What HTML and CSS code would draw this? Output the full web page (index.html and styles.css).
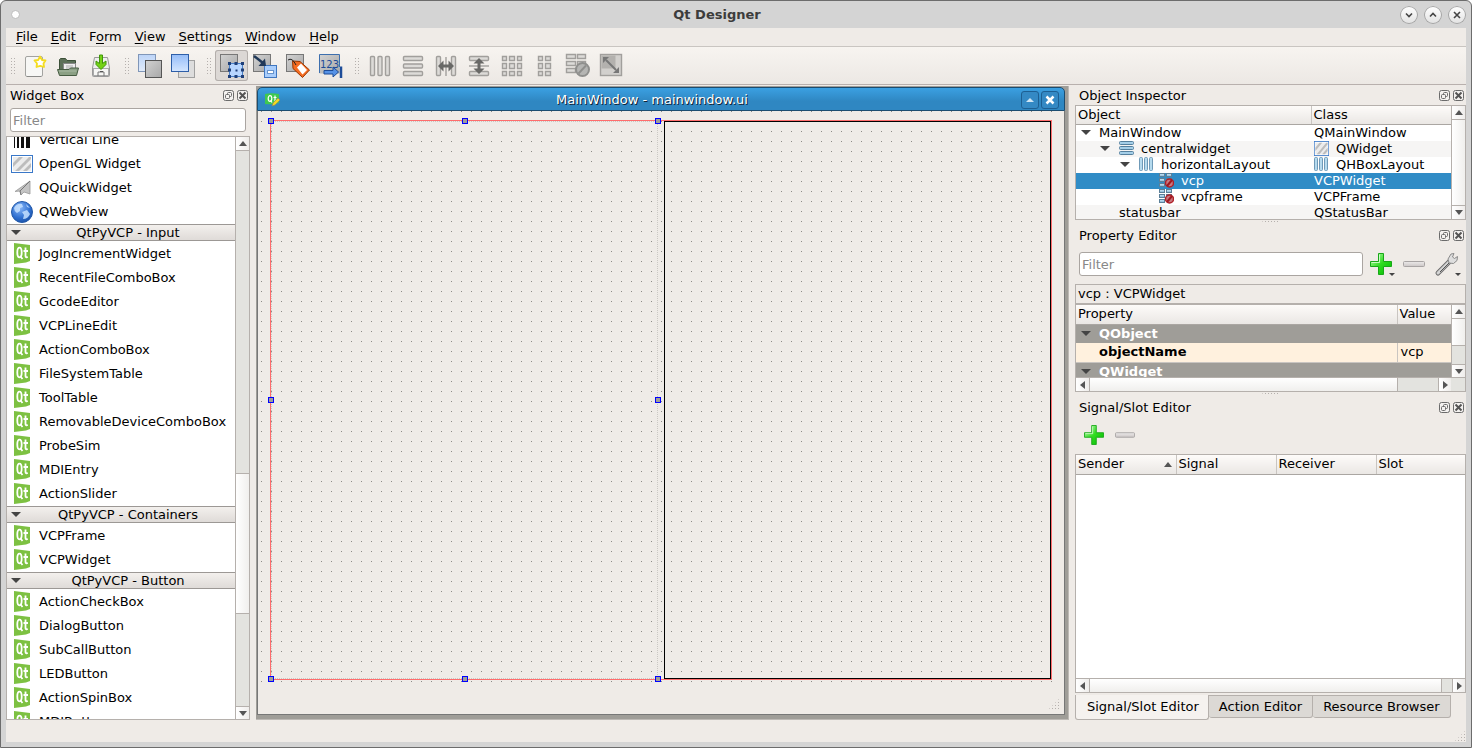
FILE: index.html
```html
<!DOCTYPE html>
<html lang="en">
<head>
<meta charset="utf-8">
<title>Qt Designer</title>
<link rel="stylesheet" href="styles.css">
</head>
<body>
<svg class="defs" aria-hidden="true">
  <defs>
    <linearGradient id="gGray" x1="0" y1="0" x2="1" y2="1"><stop offset="0" stop-color="#d2d2d2"/><stop offset="1" stop-color="#a8a8a8"/></linearGradient>
    <linearGradient id="gBlue" x1="0" y1="0" x2="0" y2="1"><stop offset="0" stop-color="#94bcf8"/><stop offset="1" stop-color="#d4e6ff"/></linearGradient>
    <linearGradient id="gPale" x1="0" y1="0" x2="0" y2="1"><stop offset="0" stop-color="#bcd4f8"/><stop offset="1" stop-color="#e2ecfa"/></linearGradient>
    <linearGradient id="gBar" x1="0" y1="0" x2="0" y2="1"><stop offset="0" stop-color="#d4ecf8"/><stop offset="1" stop-color="#7fb2d6"/></linearGradient>
    <linearGradient id="gGreen" x1="0" y1="0" x2="1" y2="1"><stop offset="0" stop-color="#c8ffc0"/><stop offset=".5" stop-color="#30dc20"/><stop offset="1" stop-color="#00b400"/></linearGradient>
    <linearGradient id="gMinus" x1="0" y1="0" x2="0" y2="1"><stop offset="0" stop-color="#eceaea"/><stop offset="1" stop-color="#cbc6c6"/></linearGradient>
    <radialGradient id="gGlobe" cx=".4" cy=".3" r=".8"><stop offset="0" stop-color="#8ab8f8"/><stop offset=".6" stop-color="#2f6fd0"/><stop offset="1" stop-color="#164a9c"/></radialGradient>
  </defs>
  <symbol id="qt" viewBox="0 0 22 22">
    <path d="M3 0 19 2V18L15 19.500 3 21Z" fill="#7dc142"/>
    <ellipse cx="8.500" cy="9.500" rx="2.200" ry="4.800" fill="none" stroke="#fff" stroke-width="1.800"/>
    <path d="M9.200 13 11.500 16M14.500 4.500V13Q14.500 14.800 16.800 14M12.500 8H17" fill="none" stroke="#fff" stroke-width="1.800"/>
  </symbol>
  <symbol id="float" viewBox="0 0 11 11">
    <rect x=".5" y=".5" width="10" height="10" rx="2" fill="#f4f2f0" stroke="#6b6b6b"/>
    <rect x="4.500" y="2.500" width="4" height="4" rx="1" fill="none" stroke="#6b6b6b"/>
    <rect x="2.500" y="4.500" width="4" height="4" rx="1" fill="#f4f2f0" stroke="#6b6b6b"/>
  </symbol>
  <symbol id="close" viewBox="0 0 11 11">
    <rect x=".5" y=".5" width="10" height="10" rx="2" fill="#f4f2f0" stroke="#6b6b6b"/>
    <path d="M2.500 2.500 8.500 8.500M8.500 2.500 2.500 8.500" stroke="#555" stroke-width="2"/>
  </symbol>
  <symbol id="plus" viewBox="0 0 22 22">
    <path d="M8.500 .5H13.500V8.500H21.500V13.500H13.500V21.500H8.500V13.500H.5V8.500H8.500Z" fill="url(#gGreen)" stroke="#18a818"/>
    <path d="M9.500 1.500V9.500H1.500" fill="none" stroke="#e4ffe0" opacity=".8"/>
  </symbol>
  <symbol id="minus" viewBox="0 0 22 22">
    <rect x=".5" y="8.500" width="21" height="5" rx="1" fill="url(#gMinus)" stroke="#a8a4a4"/>
  </symbol>
  <symbol id="hbars" viewBox="0 0 15 15">
    <g fill="#a5cfe8" stroke="#55809e"><rect x=".5" y=".5" width="14" height="3" rx="1"/><rect x=".5" y="5.500" width="14" height="3" rx="1"/><rect x=".5" y="10.500" width="14" height="3" rx="1"/></g>
  </symbol>
  <symbol id="vbars" viewBox="0 0 15 15">
    <g fill="#b5daee" stroke="#6f9ab8"><rect x=".5" y=".5" width="3" height="13" rx="1"/><rect x="5.500" y=".5" width="3" height="13" rx="1"/><rect x="10.500" y=".5" width="3" height="13" rx="1"/></g>
  </symbol>
  <symbol id="nolayout" viewBox="0 0 15 15">
    <g fill="url(#gBar)" stroke="#5c8099"><rect x=".5" y=".5" width="5" height="3"/><rect x="7.500" y=".5" width="5" height="3"/><rect x=".5" y="5.500" width="5" height="3"/><rect x="7.500" y="5.500" width="5" height="3"/><rect x=".5" y="10.500" width="5" height="3"/></g>
    <circle cx="10.500" cy="10" r="4" fill="#c87880" stroke="#b02028" stroke-width="1.500"/><path d="M13 7 8 13" stroke="#a01820" stroke-width="2"/>
  </symbol>
  <symbol id="stripes" viewBox="0 0 22 18" preserveAspectRatio="none">
    <rect x=".5" y=".5" width="21" height="17" fill="#fff" stroke="#3a78c8"/>
    <rect x="2" y="2" width="18" height="14" fill="#ececec"/>
    <path d="M2 12V8L8 2H12ZM4 16 18 2H20V4L8 16ZM12 16 20 8V12L16 16Z" fill="#bdbdbd"/>
  </symbol>
</svg>

<div class="app">
  <header class="titlebar">
    <span class="pin"></span>
    <h1>Qt Designer</h1>
    <div class="winbuttons">
      <button aria-label="Minimize"><svg viewBox="0 0 18 18"><path d="M6 7.500 9 10.500 12 7.500"/></svg></button>
      <button aria-label="Maximize"><svg viewBox="0 0 18 18"><path d="M6 10.500 9 7.500 12 10.500"/></svg></button>
      <button aria-label="Close"><svg viewBox="0 0 18 18"><path d="M6 6 12 12M12 6 6 12"/></svg></button>
    </div>
  </header>

  <div class="client">
    <nav class="menu">
      <button><u>F</u>ile</button><button><u>E</u>dit</button><button>F<u>o</u>rm</button><button><u>V</u>iew</button><button><u>S</u>ettings</button><button><u>W</u>indow</button><button><u>H</u>elp</button>
    </nav>

    <div class="toolbar">
      <span class="grip"></span>
      <button aria-label="New"><svg viewBox="0 0 24 24"><rect x="2.500" y="2.500" width="17" height="20" rx="1.500" fill="#f7f7f5" stroke="#a3a3a0"/><path d="M4 22.500H18" stroke="#8a8a88"/><path d="M17 2.500 19 6 22.500 6.500 20.500 9.500 21 13 17.200 11.800 13.500 13 14 9.500 11.500 6.500 15.200 6Z" fill="#fff" stroke="#f4dc20" stroke-width="1.800" stroke-linejoin="round"/></svg></button>
      <button aria-label="Open"><svg viewBox="0 0 24 24"><path d="M3.500 20V5.500L4.500 4.500H9.500L11 6.500H19.500V14" fill="#5c7058" stroke="#3c5038"/><rect x="7.500" y="9.500" width="12" height="9" fill="#eee" stroke="#888"/><path d="M10 12H17M10 14H17" stroke="#aaa"/><path d="M1.500 15.500H13L14.500 14H22.500L20.500 21.500H3.500Z" fill="#8ba084" stroke="#465c42"/><path d="M3 17H20.500" stroke="#a9baa4"/></svg></button>
      <button aria-label="Save"><svg viewBox="0 0 24 24"><path d="M5.500 3.500H18.500L20.500 14V21.500Q20.500 22.500 19.500 22.500H4.500Q3.500 22.500 3.500 21.500V14Z" fill="#eee" stroke="#999"/><rect x="4.500" y="14.500" width="15" height="7" fill="#f6f6f4" stroke="#aaa"/><path d="M9 22V18H15V22" fill="none" stroke="#777"/><path d="M11 17.500H14" stroke="#555"/><path d="M10.500 1H13.500V9.500L17 7V10.500L12 15.500 7 10.500V7L10.500 9.500Z" fill="#74d216" stroke="#3f9608"/></svg></button>
      <span class="grip"></span>
      <button aria-label="Send to back"><svg viewBox="0 0 24 24"><rect x=".5" y=".5" width="17" height="17" fill="url(#gPale)" stroke="#8096b8"/><rect x="7.500" y="6.500" width="16" height="17" fill="url(#gGray)" stroke="#555"/></svg></button>
      <button aria-label="Bring to front"><svg viewBox="0 0 24 24"><rect x="7.500" y="6.500" width="16" height="17" fill="#ddd" stroke="#a0a0a0"/><rect x=".5" y=".5" width="17" height="17" fill="url(#gBlue)" stroke="#2d5ea8"/></svg></button>
      <span class="grip"></span>
      <button class="active" aria-label="Edit widgets"><svg viewBox="0 0 24 24"><rect x=".5" y=".5" width="17" height="17" fill="url(#gGray)" stroke="#777"/><rect x="9.500" y="9.500" width="13" height="13" fill="#b8d6ff" stroke="#4a80c8"/><path d="M8 8h3v3H8ZM14.500 8h3v3h-3ZM21 8h3v3h-3ZM8 14.500h3v3H8ZM21 14.500h3v3h-3ZM8 21h3v3H8ZM14.500 21h3v3h-3ZM21 21h3v3h-3ZM15.500 15.500h2v2h-2Z" fill="#1f3f78"/></svg></button>
      <button aria-label="Edit signals and slots"><svg viewBox="0 0 24 24"><rect x=".5" y=".5" width="17" height="17" fill="url(#gGray)" stroke="#777"/><rect x="11.500" y="11.500" width="12" height="12" fill="#a9cdfb" stroke="#3f76c0"/><rect x="14.500" y="16.500" width="6" height="3" fill="#fff" stroke="#6794cd"/><path d="M1 2 10 9" stroke="#203858" stroke-width="2.500"/><path d="M13 12H5.500L12 4.500Z" fill="#203858"/></svg></button>
      <button aria-label="Edit buddies"><svg viewBox="0 0 24 24"><rect x=".5" y=".5" width="17" height="17" fill="url(#gGray)" stroke="#777"/><path d="M6.500 7 14 7.500 23.500 16 16.500 23.500 7 14.500Z" fill="#f46b20" stroke="#983500"/><path d="M11 13.500 15 9.500 21 16 16.500 20.500Z" fill="#fff"/><path d="M2 6Q6 3 10 11" fill="none" stroke="#222"/></svg></button>
      <button aria-label="Edit tab order"><svg viewBox="0 0 24 24"><path d="M.5.5H20.500V19.500H.5Z" fill="url(#gGray)" stroke="none"/><path d="M.5 19V.5H20.500V13" fill="none" stroke="#3d6fae"/><text class="order" x="1" y="14">123</text><path d="M5 16.500H14V13L19.500 18 14 23V20H5Z" fill="#5692e6" stroke="#1d4c98"/><path d="M22 12.500V24" stroke="#1d4c98" stroke-width="2.500"/></svg></button>
      <span class="grip"></span>
      <button class="off" aria-label="Lay out horizontally"><svg viewBox="0 0 24 24"><rect x="2.500" y="2.500" width="4" height="19" rx="1"/><rect x="10" y="2.500" width="4" height="19" rx="1"/><rect x="17.500" y="2.500" width="4" height="19" rx="1"/></svg></button>
      <button class="off" aria-label="Lay out vertically"><svg viewBox="0 0 24 24"><rect x="2.500" y="2.500" width="19" height="4" rx="1"/><rect x="2.500" y="10" width="19" height="4" rx="1"/><rect x="2.500" y="17.500" width="19" height="4" rx="1"/></svg></button>
      <button class="off" aria-label="Horizontal splitter"><svg viewBox="0 0 24 24"><rect x="2.500" y="2.500" width="4" height="19" rx="1"/><rect x="17.500" y="2.500" width="4" height="19" rx="1"/><path d="M12 3V22"/><path class="ink" d="M4 12 9.500 6.500V10.500H14.500V6.500L20 12 14.500 17.500V13.500H9.500V17.500Z"/></svg></button>
      <button class="off" aria-label="Vertical splitter"><svg viewBox="0 0 24 24"><rect x="2.500" y="2.500" width="19" height="4" rx="1"/><rect x="2.500" y="17.500" width="19" height="4" rx="1"/><path d="M2 12H22"/><path class="ink" d="M12 4 17.500 9.500H13.500V14.500H17.500L12 20 6.500 14.500H10.500V9.500H6.500Z"/></svg></button>
      <button class="off" aria-label="Grid layout"><svg viewBox="0 0 24 24"><path d="M2.500 2.500h4v4h-4ZM9.500 2.500h5v4h-5ZM17.500 2.500h4v4h-4ZM2.500 9.500h4v5h-4ZM9.500 9.500h5v5h-5ZM17.500 9.500h4v5h-4ZM2.500 17.500h4v4h-4ZM9.500 17.500h5v4h-5ZM17.500 17.500h4v4h-4Z"/></svg></button>
      <button class="off" aria-label="Form layout"><svg viewBox="0 0 24 24"><path d="M5.500 2.500h4v4h-4ZM12.500 2.500h5v4h-5ZM5.500 9.500h4v5h-4ZM12.500 9.500h5v5h-5ZM5.500 17.500h4v4h-4ZM12.500 17.500h5v4h-5Z"/></svg></button>
      <button class="off" aria-label="Break layout"><svg viewBox="0 0 24 24"><path d="M.5.5h9v4h-9ZM11.500.5h8v4h-8ZM.5 7.500h9v4h-9ZM11.500 7.500h8v4h-8ZM.5 14.500h9v4h-9Z"/><circle cx="16.500" cy="15.500" r="6.500" fill="#b5b5b3" stroke="#8f8f8d" stroke-width="2"/><path d="M20 11.500 12.500 19.500" stroke="#8f8f8d" stroke-width="2"/></svg></button>
      <button class="off" aria-label="Adjust size"><svg viewBox="0 0 24 24"><rect x="1.500" y=".5" width="21" height="21" fill="#d2d0cd"/><rect x="2.500" y="1.500" width="14" height="13" fill="#b3b1ae" stroke="none"/><path d="M7 6 17 16" stroke="#777" stroke-width="2"/><path class="ink2" d="M4 3H10L4 9ZM20 19H14L20 13Z"/></svg></button>
    </div>

    <main class="work">
      <section class="dock left">
        <div class="dock-title"><h2>Widget Box</h2><button aria-label="Float"><svg><use href="#float"/></svg></button><button aria-label="Close"><svg><use href="#close"/></svg></button></div>
        <div class="wb-filter"><input type="text" placeholder="Filter" aria-label="Filter widgets"></div>
        <div class="frame widgetbox">
          <div class="viewport">
            <ul class="first">
              <li><svg viewBox="0 0 22 22"><path d="M3 2h1V19H3ZM6 2h2V19H6ZM10 2h3V19H10ZM15 2h4V19H15Z" fill="#111"/></svg>Vertical Line</li>
              <li><svg viewBox="0 0 22 22"><use href="#stripes" width="22" height="18" y="2"/></svg>OpenGL Widget</li>
              <li><svg viewBox="0 0 22 22"><path d="M4 14.500 19 4V17L13 15 10 18 9 14Z" fill="#c4c4c4" stroke="#999" stroke-width=".8"/><path d="M19 4 9 14 10 18" fill="none" stroke="#777"/></svg>QQuickWidget</li>
              <li><svg viewBox="0 0 22 22"><circle cx="11" cy="11" r="10.500" fill="url(#gGlobe)" stroke="#2258a8"/><path d="M3 7Q6 2 11 3L12 6 9 7 9 10 6 12Q3 10 3 7ZM11 11 16 9 19 13Q17 18 12 18L13 14ZM15 3 19 7 16 6Z" fill="#c6e0ff" opacity=".85"/></svg>QWebView</li>
            </ul>
            <button class="cat"><i class="down"></i><span>QtPyVCP - Input</span></button>
            <ul>
              <li><svg><use href="#qt"/></svg>JogIncrementWidget</li>
              <li><svg><use href="#qt"/></svg>RecentFileComboBox</li>
              <li><svg><use href="#qt"/></svg>GcodeEditor</li>
              <li><svg><use href="#qt"/></svg>VCPLineEdit</li>
              <li><svg><use href="#qt"/></svg>ActionComboBox</li>
              <li><svg><use href="#qt"/></svg>FileSystemTable</li>
              <li><svg><use href="#qt"/></svg>ToolTable</li>
              <li><svg><use href="#qt"/></svg>RemovableDeviceComboBox</li>
              <li><svg><use href="#qt"/></svg>ProbeSim</li>
              <li><svg><use href="#qt"/></svg>MDIEntry</li>
              <li><svg><use href="#qt"/></svg>ActionSlider</li>
            </ul>
            <button class="cat"><i class="down"></i><span>QtPyVCP - Containers</span></button>
            <ul>
              <li><svg><use href="#qt"/></svg>VCPFrame</li>
              <li><svg><use href="#qt"/></svg>VCPWidget</li>
            </ul>
            <button class="cat"><i class="down"></i><span>QtPyVCP - Button</span></button>
            <ul>
              <li><svg><use href="#qt"/></svg>ActionCheckBox</li>
              <li><svg><use href="#qt"/></svg>DialogButton</li>
              <li><svg><use href="#qt"/></svg>SubCallButton</li>
              <li><svg><use href="#qt"/></svg>LEDButton</li>
              <li><svg><use href="#qt"/></svg>ActionSpinBox</li>
              <li><svg><use href="#qt"/></svg>MDIButton</li>
            </ul>
          </div>
          <div class="vbar"><button aria-label="Scroll up"><i class="up"></i></button><span class="track t-before"></span><span class="thumb th-widgets"></span><span class="track t-after"></span><button aria-label="Scroll down"><i class="down"></i></button></div>
        </div>
      </section>

      <section class="mdi">
        <div class="subwindow">
          <div class="sub-title">
            <svg class="sub-icon" viewBox="0 0 16 14"><path d="M0 1Q6-.5 14 1V10Q8 12 0 11Z" fill="#3fc850"/><ellipse cx="5" cy="5.500" rx="1.800" ry="2.800" fill="none" stroke="#fff" stroke-width="1.200"/><path d="M5.500 7.500 7 9.500M10 2.500V8.500M8.500 4.500H11.500" stroke="#fff" stroke-width="1.200"/><path d="M7 13 8 10 13 5 15 7 10 12Z" fill="#f4d820" stroke="#8c8a60" stroke-width=".7"/></svg>
            <h2>MainWindow - mainwindow.ui</h2>
            <button aria-label="Restore"><svg viewBox="0 0 16 16"><path d="M4 10 8 6 12 10Z"/></svg></button>
            <button aria-label="Close form"><svg viewBox="0 0 16 16"><path class="x" d="M4.500 4.500 11.500 11.500M11.500 4.500 4.500 11.500"/></svg></button>
          </div>
          <div class="canvas">
            <div class="form-layout">
              <div class="selected"><b class="h tl"></b><b class="h tc"></b><b class="h tr"></b><b class="h ml"></b><b class="h mr"></b><b class="h bl"></b><b class="h bc"></b><b class="h br"></b></div>
              <div class="vcpframe"></div>
            </div>
          </div>
          <div class="form-status"><span class="sizegrip"></span></div>
        </div>
      </section>

      <aside class="dock right">
        <section class="inspector">
          <div class="dock-title"><h2>Object Inspector</h2><button aria-label="Float"><svg><use href="#float"/></svg></button><button aria-label="Close"><svg><use href="#close"/></svg></button></div>
          <div class="frame tree">
            <div class="viewport">
              <table>
                <thead><tr><th class="c-object">Object</th><th>Class</th></tr></thead>
                <tbody>
                  <tr><td><div class="cell l0"><i class="down"></i><span>MainWindow</span></div></td><td><div class="cell">QMainWindow</div></td></tr>
                  <tr class="alt"><td><div class="cell l1"><i class="down"></i><svg><use href="#hbars"/></svg><span>centralwidget</span></div></td><td><div class="cell"><svg><use href="#stripes"/></svg><span>QWidget</span></div></td></tr>
                  <tr><td><div class="cell l2"><i class="down"></i><svg><use href="#vbars"/></svg><span>horizontalLayout</span></div></td><td><div class="cell"><svg><use href="#vbars"/></svg><span>QHBoxLayout</span></div></td></tr>
                  <tr class="sel"><td><div class="cell l3"><svg><use href="#nolayout"/></svg><span>vcp</span></div></td><td><div class="cell">VCPWidget</div></td></tr>
                  <tr><td><div class="cell l3"><svg><use href="#nolayout"/></svg><span>vcpframe</span></div></td><td><div class="cell">VCPFrame</div></td></tr>
                  <tr class="alt"><td><div class="cell leaf">statusbar</div></td><td><div class="cell">QStatusBar</div></td></tr>
                </tbody>
              </table>
            </div>
            <div class="vbar"><button aria-label="Scroll up"><i class="up"></i></button><span class="thumb fill"></span><button aria-label="Scroll down"><i class="down"></i></button></div>
          </div>
        </section>
        <div class="splitter"></div>

        <section class="properties">
          <div class="dock-title"><h2>Property Editor</h2><button aria-label="Float"><svg><use href="#float"/></svg></button><button aria-label="Close"><svg><use href="#close"/></svg></button></div>
          <div class="pe-tools">
            <input type="text" placeholder="Filter" aria-label="Filter properties">
            <button aria-label="Add property"><svg><use href="#plus"/></svg><i class="down"></i></button>
            <button aria-label="Remove property"><svg><use href="#minus"/></svg></button>
            <button aria-label="Configure"><svg viewBox="0 0 22 22"><path d="M2 20 13 9" stroke="#6d6d6d" stroke-width="5" stroke-linecap="round"/><path d="M2 20 13 9" stroke="#d4d4d4" stroke-width="3" stroke-linecap="round"/><path d="M4 19 13 10" stroke="#555"/><path d="M12 6 15 1 18 .5 16.500 4 18.500 5.500 21.500 3.500 21 7.500 17.500 10.500 13 10Z" fill="#dedede" stroke="#8a8a8a"/></svg><i class="down"></i></button>
          </div>
          <div class="objlabel">vcp : VCPWidget</div>
          <div class="frame props">
            <div class="props-main">
              <div class="viewport">
                <table>
                  <thead><tr><th>Property</th><th class="c-value">Value</th></tr></thead>
                  <tbody>
                    <tr class="group"><td colspan="2"><div class="cell l0"><i class="down"></i><span>QObject</span></div></td></tr>
                    <tr class="prop"><td><b>objectName</b></td><td>vcp</td></tr>
                    <tr class="group"><td colspan="2"><div class="cell l0"><i class="down"></i><span>QWidget</span></div></td></tr>
                  </tbody>
                </table>
              </div>
              <div class="vbar"><button aria-label="Scroll up"><i class="up"></i></button><span class="thumb th-props"></span><span class="track fill"></span><button aria-label="Scroll down"><i class="down"></i></button></div>
            </div>
            <div class="hbar corner"><button aria-label="Scroll left"><i class="lt"></i></button><span class="thumb fill"></span><span class="track tr-props"></span><button aria-label="Scroll right"><i class="rt"></i></button></div>
          </div>
        </section>
        <div class="splitter"></div>

        <section class="signals">
          <div class="dock-title"><h2>Signal/Slot Editor</h2><button aria-label="Float"><svg><use href="#float"/></svg></button><button aria-label="Close"><svg><use href="#close"/></svg></button></div>
          <div class="sig-tools"><button aria-label="Add connection"><svg><use href="#plus"/></svg></button><button aria-label="Remove connection"><svg><use href="#minus"/></svg></button></div>
          <div class="frame sigtable">
            <div class="viewport">
              <table><thead><tr><th class="c-sig"><div class="sort">Sender<i class="up"></i></div></th><th class="c-sig">Signal</th><th class="c-sig">Receiver</th><th>Slot</th></tr></thead></table>
            </div>
            <div class="hbar"><button aria-label="Scroll left"><i class="lt"></i></button><span class="thumb fill"></span><span class="track tr-sig"></span><button aria-label="Scroll right"><i class="rt"></i></button></div>
          </div>
          <div class="tabs"><button class="current">Signal/Slot Editor</button><button>Action Editor</button><button>Resource Browser</button></div>
        </section>
      </aside>
    </main>
    <footer class="status"><span class="sizegrip"></span></footer>
  </div>
</div>
</body>
</html>
```
FILE: styles.css
```css
* { box-sizing: border-box; }
html, body { margin: 0; height: 100%; }
body {
  background: #fff;
  color: #000;
  font: 13px/16px "DejaVu Sans", Verdana, sans-serif;
}
h1, h2, ul { margin: 0; padding: 0; font-size: 13px; font-weight: normal; list-style: none; }
button { margin: 0; padding: 0; border: 0; background: none; color: inherit; font: inherit; }
svg { display: block; flex: none; overflow: visible; }
.defs { position: absolute; width: 0; height: 0; }

.app {
  display: flex;
  flex-direction: column;
  height: 100vh;
  border: 1px solid #6c6c6c;
  border-radius: 6px 6px 0 0;
  background: #d4d4d4;
  padding: 0 5px 5px;
}
.titlebar { display: flex; align-items: center; flex: none; height: 27px; padding: 0 0 0 5px; }
.titlebar h1 { flex: 1; padding-left: 14px; text-align: center; font-weight: bold; color: #3c3c3c; }
.pin { width: 9px; height: 9px; border-radius: 50%; background: #fff; border: 1px solid #bcbcbc; }
.winbuttons { display: flex; gap: 6px; }
.winbuttons svg { width: 18px; height: 18px; fill: none; stroke: #444; stroke-width: 1.6; }
.winbuttons button { border-radius: 50%; background: linear-gradient(#fff, #e2e2e2); box-shadow: inset 0 0 0 1px #a4a4a4; }

.client { display: flex; flex-direction: column; flex: 1; min-height: 0; background: #efebe7; }
.menu { display: flex; flex: none; height: 19px; padding: 0 3px; border-bottom: 1px solid #c9c5c1; }
.menu button { padding: 0 6px 0 7px; line-height: 18px; }
.menu u { text-underline-offset: 2px; text-decoration-thickness: 1px; }

.toolbar {
  display: flex;
  align-items: center;
  flex: none;
  height: 38px;
  border-bottom: 1px solid #b8b0ad;
  background: linear-gradient(#f7f4f0, #ece8e4);
}
.toolbar button { display: grid; place-items: center; width: 33px; height: 31px; border-radius: 3px; }
.toolbar svg { width: 24px; height: 24px; }
.toolbar .active { background: #dcd8d5; box-shadow: inset 0 0 0 1px #b3aeab; }
.order { font: 10px "DejaVu Sans", sans-serif; fill: #1d4c98; }
.grip {
  width: 6px;
  height: 18px;
  margin: 0 3px 0 7px;
  background: radial-gradient(circle, #b5b0ad 1px, transparent 1px) 0 0 / 3px 3px;
}
.toolbar .grip:first-child { margin: 0 2px 0 4px; }
.off svg { fill: #dddbd8; stroke: #a19f9c; stroke-width: 1.4; }
.off .ink { fill: #686866; stroke: none; }
.off .ink2 { fill: #777; stroke: none; }

.work { display: flex; flex: 1; min-height: 0; gap: 6px; padding-top: 1px; }
.dock { display: flex; flex-direction: column; flex: none; min-height: 0; }
.left { width: 244px; }
.right { width: 391px; }
.dock-title { display: flex; align-items: center; flex: none; gap: 3px; height: 19px; padding: 0 2px 0 4px; }
.dock-title h2 { flex: 1; }
.dock-title svg { width: 11px; height: 11px; }
input {
  height: 24px;
  min-width: 0;
  padding: 0 2px;
  border: 1px solid #aaa5a1;
  border-radius: 3px;
  background: #fff;
  font: inherit;
}
input::placeholder { color: #888; opacity: 1; }
.wb-filter { padding: 3px 4px; }
.wb-filter input { width: 100%; }
.frame { border: 1px solid #b5b0ac; background: #fff; }
.viewport { flex: 1; min-width: 0; min-height: 0; overflow: hidden; }

.widgetbox { display: flex; flex: 1; min-height: 0; margin-top: 1px; }
.widgetbox .first { margin-top: -9px; }
.widgetbox li { display: flex; align-items: center; gap: 6px; height: 24px; padding-left: 4px; white-space: nowrap; }
.widgetbox li svg { width: 22px; height: 22px; }
.cat {
  display: flex;
  align-items: center;
  width: 100%;
  height: 17px;
  margin-bottom: 1px;
  padding: 0 0 0 4px;
  border: solid #9c9895;
  border-width: 1px 0;
  background: linear-gradient(#f3f0ed, #dfdbd8);
}
.cat span { flex: 1; text-align: center; }

i { display: block; flex: none; width: 0; height: 0; border: solid transparent; }
.down { border-width: 5px 5px 0; border-top-color: #444; }
.up { border-width: 0 4px 5px; border-bottom-color: #555; }
.lt { border-width: 4px 5px 4px 0; border-right-color: #555; }
.rt { border-width: 4px 0 4px 5px; border-left-color: #555; }

.vbar, .hbar { display: flex; flex: none; background: #e3e3df; }
.vbar { flex-direction: column; width: 14px; border-left: 1px solid #b5b0ac; }
.hbar { height: 14px; border-top: 1px solid #b5b0ac; }
.vbar button, .hbar button { display: grid; place-items: center; flex: none; background: linear-gradient(90deg, #fff, #efedeb); }
.vbar button { height: 13px; }
.vbar .down { border-width: 5px 4px 0; border-top-color: #555; }
.hbar button { width: 13px; }
.thumb { border: solid #b5b0ac; }
.vbar .thumb { border-width: 1px 0; background: linear-gradient(90deg, #fff, #f0efed); }
.hbar .thumb { border-width: 0 1px; background: linear-gradient(#fff, #f0efed); }
.fill { flex: 1; }
.t-before { flex: 324; border-top: 1px solid #b5b0ac; }
.th-widgets { flex: 139; }
.t-after { flex: 93; }
.th-props { height: 28px; }
.vbar .track + button { border-top: 1px solid #b5b0ac; }
.hbar .track + button { border-left: 1px solid #b5b0ac; }
.tr-props { width: 40px; }
.tr-sig { width: 10px; }
.corner { padding-right: 14px; }

.mdi { display: flex; flex: 1; min-width: 0; padding: 1px 3px 4px 1px; background: #9f9d98; border: solid #bdb9b5; border-width: 0 1px 1px 0; }
.subwindow { display: flex; flex-direction: column; flex: 1; min-width: 0; }
.sub-title {
  display: flex;
  align-items: center;
  flex: none;
  gap: 2px;
  height: 24px;
  padding: 1px 5px 0 7px;
  border: 1px solid #1b4c70;
  border-radius: 5px 5px 0 0;
  background: linear-gradient(#3ba0e2, #2f87c2 60%, #2f87c2);
  color: #fff;
}
.sub-title h2 { flex: 1; padding-left: 2px; text-align: center; text-shadow: 1px 1px 0 #123; }
.sub-icon { width: 16px; height: 14px; }
.sub-title button { border: 1px solid #1d5f92; border-radius: 3px; background: #3489c4; }
.sub-title button svg { width: 16px; height: 16px; fill: #cfe5f4; }
.sub-title .x { fill: none; stroke: #fff; stroke-width: 2.5; }
.canvas {
  display: flex;
  flex: 1;
  min-height: 0;
  padding: 9px 12px 2px;
  border: solid #777;
  border-width: 0 1px;
  background:
    linear-gradient(#efebe7, #efebe7) 100% 0 / 10px 100% no-repeat,
    linear-gradient(90deg, transparent 1px, #efebe7 1px) 3px 0 / 10px 10px,
    linear-gradient(#8e8c88 1px, #efebe7 1px) 3px 0 / 10px 10px;
}
.form-layout { display: grid; grid-template-columns: 1fr 1fr; gap: 6px; flex: 1; border: 1px solid #ff6c6c; }
.selected { position: relative; border: 1px dotted #cbc8c4; }
.vcpframe { border: 1px solid #000; }
.h { position: absolute; width: 6px; height: 6px; border: 1px solid #00f; background: #9f9d98; }
.tl, .tc, .tr { top: -4px; }
.bl, .bc, .br { bottom: -4px; }
.ml, .mr { top: calc(50% - 3px); }
.tl, .ml, .bl { left: -4px; }
.tc, .bc { left: calc(50% - 3px); }
.tr, .mr, .br { right: -4px; }
.form-status { display: flex; justify-content: flex-end; align-items: flex-end; flex: none; height: 33px; padding: 4px; border: solid #777; border-width: 0 1px 1px; background: #efebe7; }
.sizegrip { width: 12px; height: 12px; background: radial-gradient(circle, #b5b0ad 1px, transparent 1px) 0 0 / 3px 3px; clip-path: polygon(100% 0, 100% 100%, 0 100%); }

table { width: 100%; border-collapse: collapse; table-layout: fixed; }
th { height: 19px; padding: 0 2px; border-bottom: 1px solid #aaa6a2; border-right: 1px solid #c9c5c1; background: linear-gradient(#fdfbf9, #eae7e4); font-weight: normal; text-align: left; }
th:last-child { border-right: 0; }
td { padding: 0 3px; }
.tree { display: flex; height: 115px; }
.tree tr { height: 16px; }
.tree th { height: 18px; }
.tree td { height: 16px; line-height: 15px; }
.c-object { width: 235px; }
.cell { display: flex; align-items: center; height: 16px; }
.cell svg { width: 15px; height: 15px; margin-right: 7px; }
.cell .down { margin-right: 9px; }
.l0 { padding-left: 2px; }
.l0 .down { margin-left: 0; margin-right: 8px; }
.l1 { padding-left: 21px; }
.l2 { padding-left: 41px; }
.l3 { padding-left: 80px; }
.leaf { padding-left: 40px; }
.alt { background: #f6f5f4; }
.sel { background: #308cc6; color: #fff; }

.splitter { flex: none; height: 6px; background: radial-gradient(circle, #b5b0ad 1px, transparent 1px) 0 0 / 3px 3px; clip-path: inset(0 calc(50% - 9px) 3px calc(50% - 8px)); }
.pe-tools { display: flex; align-items: center; gap: 11px; padding: 7px 8px 8px 4px; }
.pe-tools input { flex: 1; margin-right: -4px; }
.pe-tools button { position: relative; }
.pe-tools svg, .sig-tools svg { width: 22px; height: 22px; }
.pe-tools i { position: absolute; right: -3px; bottom: -1px; border-width: 3px 3px 0; }
.objlabel { height: 20px; padding: 1px 2px; border: 1px solid #b5b0ac; }
.props-main { display: flex; height: 72px; }
.props tbody tr { height: 19px; }
.c-value { width: 54px; }
.group { background: #9f9d98; color: #fff; font-weight: bold; }
.prop { background: #fff1de; }
.prop td { border: 1px solid #c9c5c1; border-width: 0 1px 1px 0; padding-left: 3px; }
.prop td:first-child { padding-left: 23px; }
.prop td:last-child { border-right: 0; }
.signals { display: flex; flex-direction: column; flex: 1; min-height: 0; }
.sig-tools { display: flex; gap: 11px; padding: 8px 9px; }
.sig-tools svg { width: 20px; height: 20px; }
.sigtable { display: flex; flex-direction: column; flex: 1; min-height: 0; margin-top: 1px; }
.c-sig { width: 100px; }
.sort { display: flex; align-items: center; justify-content: space-between; padding-right: 2px; }
.tabs { display: flex; align-items: flex-start; flex: none; height: 25px; margin-top: 2px; }
.tabs button { height: 23px; padding: 0 10px; border: 1px solid #b5b0ac; border-left-width: 0; border-radius: 0 0 3px 3px; background: #dcd9d5; line-height: 20px; }
.tabs .current { height: 25px; padding: 0 9px 0 11px; border-left-width: 1px; border-top: 0; background: #f5f2ef; line-height: 24px; }
.status { display: flex; justify-content: flex-end; align-items: flex-end; flex: none; height: 22px; }
```
